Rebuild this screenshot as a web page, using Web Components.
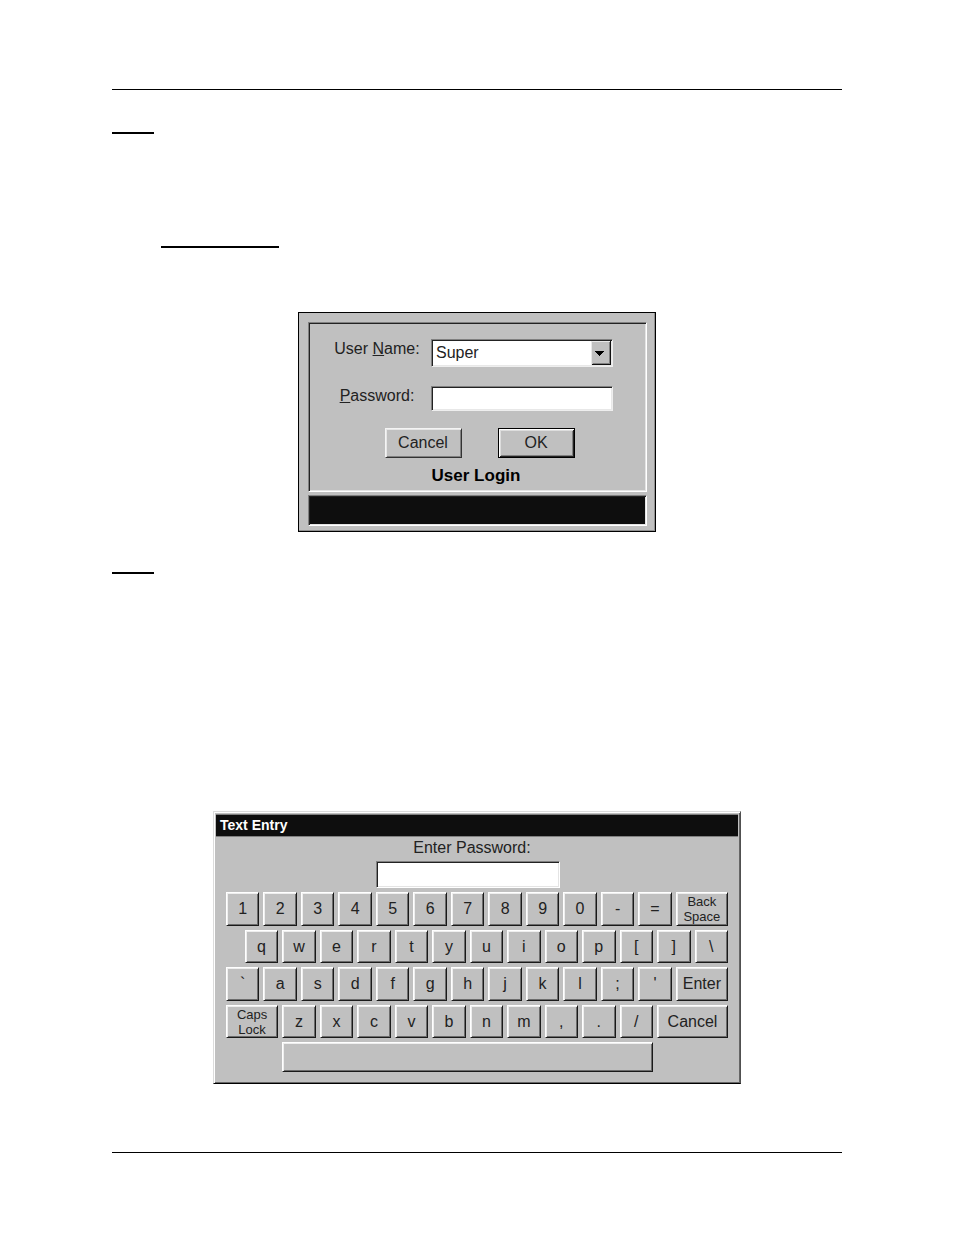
<!DOCTYPE html>
<html lang="en">
<head>
<meta charset="utf-8">
<title>User Login and Text Entry</title>
<style>
  body { margin: 0; background: #fff; color: #000; font: 16px/20px "Liberation Sans", Arial, sans-serif; }
</style>
</head>
<body>
<manual-page>
  <doc-rule></doc-rule>
  <doc-mark class="a"></doc-mark>
  <doc-mark class="b" wide></doc-mark>
  <login-dialog></login-dialog>
  <doc-mark class="c"></doc-mark>
  <text-keyboard></text-keyboard>
  <doc-rule class="foot"></doc-rule>
</manual-page>
<script>
function define(name, html, setup) {
  const template = document.createElement('template');
  template.innerHTML = html;
  customElements.define(name, class extends HTMLElement {
    constructor() {
      super();
      this.attachShadow({ mode: 'open' }).append(template.content.cloneNode(true));
    }
    connectedCallback() { if (setup) setup(this, this.shadowRoot); }
  });
}

define('manual-page', `
<style>
  :host { display: flex; flex-direction: column; padding: 89px 112px 82px; }
  ::slotted(.a) { margin-top: 42px; }
  ::slotted(.b) { margin: 112px 0 0 49px; }
  ::slotted(login-dialog) { margin-top: 64px; align-self: center; }
  ::slotted(.c) { margin-top: 40px; }
  ::slotted(text-keyboard) { margin-top: 237px; align-self: center; }
  ::slotted(.foot) { margin-top: 68px; }
</style>
<slot></slot>`);

define('doc-rule', `<style>:host { display: block; height: 1px; background: #000; }</style>`);

define('doc-mark', `
<style>
  :host { display: block; width: 42px; height: 2px; background: #000; }
  :host([wide]) { width: 118px; }
</style>`);

// Sunken frame with a slot for its content
define('sunken-box', `
<style>
  :host { display: block; box-sizing: border-box; border: 1px solid; border-color: #808080 #fff #fff #808080;
    box-shadow: inset 1px 1px #222, inset -1px -1px #e4e4e4; }
</style>
<slot></slot>`);

// Raised push button; "primary" adds the black default outline
define('raised-button', `
<style>
  :host { display: block; }
  button { display: flex; align-items: center; justify-content: center; width: 100%; height: 100%; margin: 0; padding: 0;
    box-sizing: border-box; background: #c0c0c0; color: #222; font: inherit; text-align: center; white-space: pre-line;
    border: 1px solid; border-color: #f4f4f4 #333 #333 #f4f4f4; border-radius: 0;
    box-shadow: inset 1px 1px #e6e6e6, inset -1px -1px #808080; }
  :host([key]) button { border-color: #fff #1a1a1a #1a1a1a #fff; box-shadow: inset 1px 1px #eee, inset -1px -1px #6c6c6c; }
  :host([primary]) button { border-color: #000; box-shadow: inset 1px 1px #fff, inset -1px -1px #222, inset 2px 2px #ddd, inset -2px -2px #808080; }
</style>
<button type="button"><slot></slot></button>`);

define('login-dialog', `
<style>
  :host { display: block; box-sizing: border-box; width: 358px; max-width: 100%; padding: 9px 8px 5px 9px;
    border: 1px solid #000; background: #c0c0c0; color: #222; box-shadow: inset -1px -1px #909090; }
  form { display: block; margin: 0; padding: 16px 33px 5px 24px; }
  .fields { display: grid; grid-template-columns: 88px 1fr; column-gap: 10px; row-gap: 19px; align-items: start; }
  label { text-align: center; white-space: nowrap; }
  .drop { position: relative; }
  select, input { display: block; box-sizing: border-box; width: 100%; height: 25px; margin: 0; padding: 0 3px;
    appearance: none; border-radius: 0; outline: 0; background: #fff; color: #222; font: inherit;
    border: 1px solid; border-color: #808080 #eee #eee #808080; box-shadow: inset 1px 1px #222, inset -1px -1px #e8e8e8; }
  select { height: 28px; padding: 0 24px 0 4px; }
  .arrow { position: absolute; top: 2px; right: 2px; width: 20px; height: 24px; pointer-events: none; }
  .actions { display: grid; grid-template-columns: 77px 77px; justify-content: center; gap: 36px; padding-left: 13px; margin-top: 17px; }
  raised-button { height: 30px; }
  h2 { margin: 8px 0 0; padding-left: 6px; font-size: 17px; line-height: 20px; text-align: center; color: #000; }
  .status { height: 31px; margin-top: 3px; background: #0e0e0e; }
</style>
<sunken-box>
  <form>
    <div class="fields">
      <label for="user">User <u>N</u>ame:</label>
      <div class="drop">
        <select id="user"><option>Super</option></select>
        <svg class="arrow" viewBox="0 0 20 24" aria-hidden="true" shape-rendering="crispEdges">
          <path d="M0 0h20v24H0z" fill="#c0c0c0"/>
          <path d="M0 24V0h20v1H1v23z" fill="#e8e8e8"/>
          <path d="M19 0h1v24H1v-1h18z" fill="#111"/>
          <path d="M18 1h1v22H2v-1h16z" fill="#808080"/>
          <path d="M4 10h9v1h-1v1h-1v1h-1v1H9v1H8v-1H7v-1H6v-1H5v-1H4z" fill="#000"/>
        </svg>
      </div>
      <label for="pass"><u>P</u>assword:</label>
      <input id="pass" type="password">
    </div>
    <div class="actions">
      <raised-button>Cancel</raised-button>
      <raised-button primary>OK</raised-button>
    </div>
    <h2>User Login</h2>
  </form>
</sunken-box>
<sunken-box class="status"></sunken-box>`);

define('text-keyboard', `
<style>
  :host { display: block; box-sizing: border-box; width: 528px; max-width: 100%; padding: 1px 1px 11px; background: #c0c0c0; color: #222;
    border: 1px solid; border-color: #dcdcdc #505050 #000 #dcdcdc; box-shadow: inset 1px 1px #fff, inset -1px -1px #666; }
  h2 { margin: 1px; padding: 0 4px; background: #0e0e0e; color: #fff; font-size: 14px; line-height: 21px; border: solid #808080; border-width: 1px 0; }
  .entry { display: flex; flex-direction: column; align-items: center; padding-right: 18px; }
  label { line-height: 20px; padding-left: 8px; }
  input { box-sizing: border-box; width: 184px; height: 27px; margin: 3px 0 0; padding: 0 4px; border-radius: 0; outline: 0; background: #fff; font: inherit;
    border: 1px solid; border-color: #808080 #fff #fff #808080; box-shadow: inset 1px 1px #222, inset -1px -1px #e4e4e4; }
  .keys { display: grid; grid-template-columns: repeat(27, 1fr); grid-template-rows: 34px 33px 34px 33px 30px; gap: 4px; padding: 4px 11px 0; }
  .small { font-size: 13px; line-height: 15px; }
</style>
<h2>Text Entry</h2>
<div class="entry">
  <label for="entry">Enter Password:</label>
  <input id="entry" type="password">
</div>
<div class="keys"></div>`, (host, root) => {
  const grid = root.querySelector('.keys');
  if (grid.childElementCount) return;
  const add = (text, row, start, span) => {
    const key = document.createElement('raised-button');
    key.setAttribute('key', '');
    key.textContent = text;
    key.style.gridArea = row + ' / ' + start + ' / auto / span ' + span;
    if (text.includes('\n')) key.className = 'small';
    grid.append(key);
  };
  // Each row: first grid column, then its keys as [text, columns]
  const single = s => [...s].map(c => [c, 2]);
  const rows = [
    [1, ...single('1234567890-='), ['Back\nSpace', 3]],
    [2, ...single('qwertyuiop[]\\')],
    [1, ...single("`asdfghjkl;'"), ['Enter', 3]],
    [1, ['Caps\nLock', 3], ...single('zxcvbnm,./'), ['Cancel', 4]],
    [4, ['', 20]]
  ];
  rows.forEach(([start, ...keys], i) => {
    let column = start;
    for (const [text, span] of keys) { add(text, i + 1, column, span); column += span; }
  });
});
</script>
</body>
</html>
